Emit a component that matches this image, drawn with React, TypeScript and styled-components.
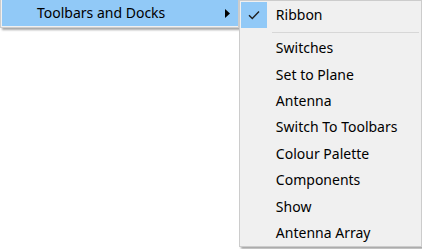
import React from 'react';
import styled, { createGlobalStyle } from 'styled-components';

// 하위 메뉴 항목
const subItems = [
  'Switches',
  'Set to Plane',
  'Antenna',
  'Switch To Toolbars',
  'Colour Palette',
  'Components',
  'Show',
  'Antenna Array',
];

const GlobalStyle = createGlobalStyle`
  html, body {
    margin: 0;
    padding: 0;
    background: #ffffff;
    overflow: hidden;
  }
  body {
    font-family: 'Segoe UI', 'Noto Sans', 'Open Sans', sans-serif;
    font-size: 14px;
    color: #000000;
  }
`;

const Screen = styled.div`
  display: flex;
  align-items: flex-start;
  width: 422px;
  height: 249px;
`;

const ParentMenu = styled.div`
  width: 237px;
  background: #f0f0f0;
  border: 1px solid #cccccc;
  border-top: none;
  padding: 0 0 1px 1px;
  box-shadow: 2px 2px 2px rgba(0, 0, 0, 0.35);
`;

const ParentItem = styled.div`
  display: flex;
  align-items: center;
  height: 26px;
  background: #91c9f7;
  padding-left: 35px;
  padding-right: 8px;
`;

const ItemLabel = styled.span`
  flex: 1;
  white-space: nowrap;
  line-height: 1;
`;

const Arrow = styled.svg`
  width: 5px;
  height: 9px;
  margin-top: 1px;
`;

const SubMenu = styled.div`
  width: 180px;
  background: #f0f0f0;
  border: 1px solid #cccccc;
  padding: 1px 1px 0 1px;
  box-shadow: 2px 2px 2px rgba(0, 0, 0, 0.35);
`;

const Row = styled.div<{ $h: number }>`
  display: flex;
  align-items: center;
  height: ${(p) => p.$h}px;
`;

const CheckCell = styled.div<{ $checked?: boolean }>`
  display: flex;
  align-items: center;
  justify-content: center;
  width: 26px;
  height: 100%;
  background: ${(p) => (p.$checked ? '#91c9f7' : 'transparent')};
  margin-right: 9px;
`;

const Separator = styled.div`
  height: 7px;
  display: flex;
  align-items: center;
  padding-left: 31px;
  padding-right: 1px;

  &::after {
    content: '';
    flex: 1;
    height: 1px;
    background: #d7d7d7;
    margin-top: 1px;
  }
`;

const App = () => {
  return (
    <Screen>
      <GlobalStyle />
      <ParentMenu>
        <ParentItem>
          <ItemLabel>Toolbars and Docks</ItemLabel>
          <Arrow viewBox="0 0 5 9">
            <path d="M0 0 L5 4.5 L0 9 Z" fill="#000" />
          </Arrow>
        </ParentItem>
      </ParentMenu>
      <SubMenu>
        <Row $h={26}>
          <CheckCell $checked>
            <svg width="12" height="10" viewBox="0 0 12 10">
              <path d="M1 5.2 L4.3 8.5 L11 1.5" fill="none" stroke="#1f1f1f" strokeWidth="1.4" />
            </svg>
          </CheckCell>
          <ItemLabel>Ribbon</ItemLabel>
        </Row>
        <Separator />
        {subItems.map((label) => (
          <Row key={label} $h={26.4}>
            <CheckCell />
            <ItemLabel>{label}</ItemLabel>
          </Row>
        ))}
      </SubMenu>
    </Screen>
  );
};

export default App;
